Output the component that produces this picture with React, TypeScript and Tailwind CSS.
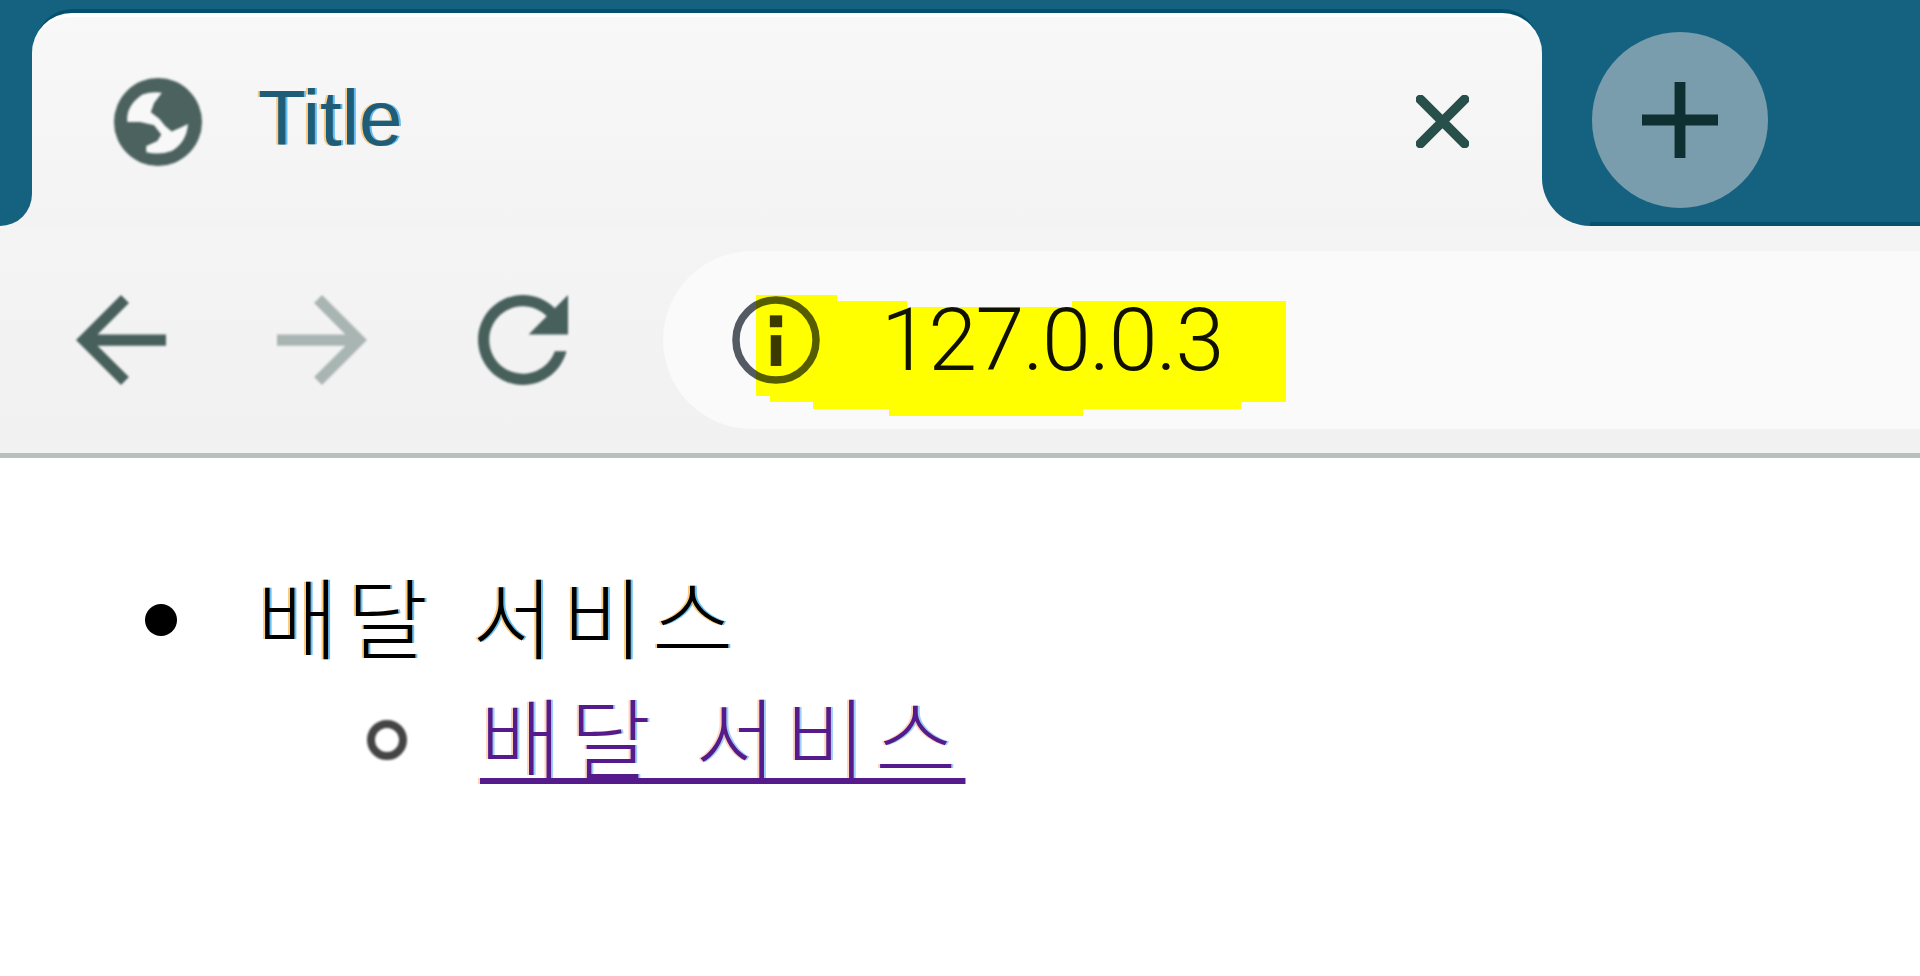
const CLOSE = "M6.5 6.5L17.5 17.5M17.5 6.5L6.5 17.5";
const PLUS = "M19 13h-6v6h-2v-6H5v-2h6V5h2v6h6v2z";
const BACK = "M20 11H7.83l5.59-5.59L12 4l-8 8 8 8 1.41-1.41L7.83 13H20v-2z";
const FORWARD = "M12 4l-1.41 1.41L16.17 11H4v2h12.17l-5.58 5.59L12 20l8-8z";
const RELOAD =
  "M17.65 6.35C16.2 4.9 14.21 4 12 4c-4.42 0-7.99 3.58-7.99 8s3.57 8 7.99 8c3.73 0 6.84-2.55 7.73-6h-2.08c-.82 2.33-3.04 4-5.65 4-3.31 0-6-2.69-6-6s2.69-6 6-6c1.66 0 3.14.69 4.22 1.78L13 11h7V4l-2.35 2.35z";

interface IIconProps {
  d: string;
  box: string;
  className: string;
}

const Icon = ({ d, box, className }: IIconProps) => (
  <svg viewBox={box} className={className} fill="currentColor">
    <path d={d} />
  </svg>
);

const GlobeIcon = () => (
  <svg viewBox="25 23 270 270" className="h-[88px] w-[88px] blur-[1px]">
    <circle cx="160" cy="158" r="135" fill="#4b625f" />
    <path
      fill="#f8f8f8"
      d="M112 74Q140 64 172 68L148 100L138 128L164 148L182 170L202 187L228 176L252 164Q248 220 202 247Q165 260 124 251L124 232L158 216L170 196L148 168L105 158L66 158Q60 110 112 74Z"
    />
  </svg>
);

const InfoIcon = () => (
  <svg viewBox="2 2 20 20" className="relative h-[88px] w-[88px] mix-blend-multiply blur-[0.6px]">
    <circle cx="12" cy="12" r="9.1" fill="none" stroke="#565c66" strokeWidth="1.7" />
    <rect x="10.6" y="6.4" width="2.8" height="2.7" fill="#3a3a3a" />
    <rect x="10.8" y="10.9" width="2.4" height="7" fill="#3a3a3a" />
  </svg>
);

const TabStrip = () => (
  <div className="relative flex h-[226px] shrink-0 items-start border-b-4 border-[#05536f] bg-[#14627f] pl-[32px] pt-[13px]">
    <div className="absolute bottom-[-4px] left-0 h-[46px] w-[32px] bg-[#f3f3f3]">
      <div className="h-full w-full rounded-br-[40px] bg-[#14627f]" />
    </div>
    <div className="relative flex h-[213px] w-[1510px] items-center rounded-t-[40px] border-t-4 border-white bg-gradient-to-b from-[#f8f8f8] to-[#f3f3f3] pl-[82px] pr-[73px] shadow-[0_-8px_0_-4px_#03516f]">
      <GlobeIcon />
      <span className="mb-[8px] ml-[56px] font-['Liberation_Sans',sans-serif] text-[78px] leading-none text-[#1f5c78] blur-[0.6px] [text-shadow:-2px_0_0_rgba(255,170,40,0.55),2px_0_0_rgba(0,150,240,0.6)]">
        Title
      </span>
      <svg viewBox="5.4 5.4 13.2 13.2" className="ml-auto h-[53px] w-[53px] text-[#27504a] blur-[0.6px]">
        <path d={CLOSE} fill="none" stroke="currentColor" strokeWidth="2.4" strokeLinecap="round" />
      </svg>
      <div className="absolute bottom-0 right-[-48px] h-[48px] w-[48px] bg-[#f3f3f3]">
        <div className="h-full w-full rounded-bl-[48px] bg-[#14627f]" />
      </div>
    </div>
    <div className="ml-[50px] mt-[19px] flex h-[176px] w-[176px] items-center justify-center rounded-full bg-[#7a9dad]">
      <Icon d={PLUS} box="5 5 14 14" className="h-[76px] w-[76px] text-[#0f3030] blur-[0.6px]" />
    </div>
  </div>
);

const Toolbar = () => (
  <div className="flex h-[232px] shrink-0 items-center border-b-[5px] border-[#b8c0be] bg-gradient-to-b from-[#f4f4f4] to-[#f1f1f1] pl-[76px]">
    <div className="flex items-center gap-[111px]">
      <Icon d={BACK} box="4 4 16 16" className="h-[90px] w-[90px] text-[#47605c] blur-[0.8px]" />
      <Icon d={FORWARD} box="4 4 16 16" className="h-[90px] w-[90px] text-[#a9b5b2] blur-[0.8px]" />
      <Icon d={RELOAD} box="4 4 16 16" className="h-[90px] w-[90px] text-[#47605c] blur-[0.8px]" />
    </div>
    <div className="relative ml-[95px] flex h-[178px] flex-1 items-center rounded-l-[89px] bg-[#fafafa] pl-[69px]">
      {/* yellow marker scribbled over the address */}
      <svg viewBox="0 0 530 121" className="absolute left-[93px] top-[44px] h-[121px] w-[530px] blur-[0.5px]">
        <polygon
          fill="#ffff00"
          points="0,0 81,0 81,6 151,6 151,12 316,12 316,6 530,6 530,107 485,107 485,114 327,114 327,121 133,121 133,114 57,114 57,107 14,107 14,101 0,101"
        />
      </svg>
      <InfoIcon />
      <span className="relative ml-[61px] font-['Roboto',sans-serif] text-[88px] font-light leading-none tracking-[-1.6px] text-[#111] mix-blend-multiply blur-[0.4px]">
        127.0.0.3
      </span>
    </div>
  </div>
);

const App = () => {
  return (
    <div className="flex min-h-screen flex-col bg-white">
      <TabStrip />
      <Toolbar />
      <ul className="pt-[96px] font-['Noto_Sans_CJK_KR',sans-serif] text-[88px] font-light leading-[120px] tracking-[9px] [word-spacing:7px]">
        <li className="flex items-center pl-[145px]">
          <span className="mt-[12px] h-[32px] w-[32px] rounded-full bg-black blur-[0.6px]" />
          <span className="ml-[80px] text-black blur-[0.5px] [text-shadow:-2px_0_0_rgba(255,170,40,0.6),2px_0_0_rgba(0,150,240,0.6)]">
            배달 서비스
          </span>
        </li>
        <li className="flex items-center pl-[367px]">
          <span className="mt-[12px] h-[40px] w-[40px] rounded-full border-[8px] border-[#444] blur-[0.8px]" />
          <a
            href="#"
            className="ml-[73px] text-[#551a8b] underline decoration-[6px] underline-offset-[6px] blur-[0.4px] [text-shadow:-2px_0_0_rgba(255,170,120,0.5),2px_0_0_rgba(60,160,240,0.5)]"
          >
            배달 서비스
          </a>
        </li>
      </ul>
    </div>
  );
};

export default App;
